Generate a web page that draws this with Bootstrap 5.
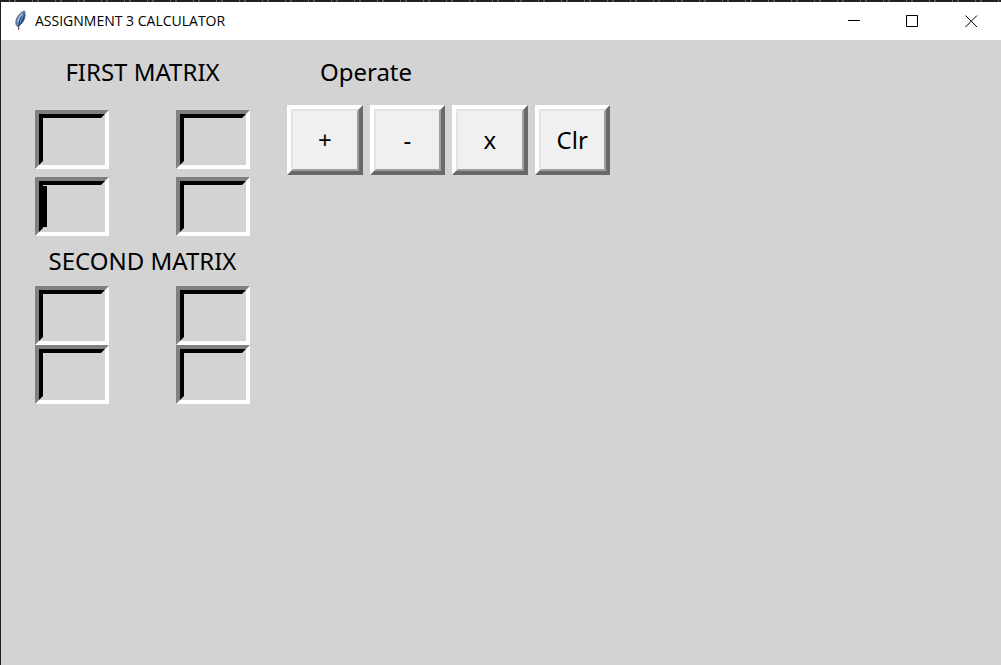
<!DOCTYPE html>
<html lang="en">
<head>
<meta charset="utf-8">
<meta name="viewport" content="width=device-width, initial-scale=1">
<title>ASSIGNMENT 3 CALCULATOR</title>
<link href="https://cdn.jsdelivr.net/npm/bootstrap@5.3.0/dist/css/bootstrap.min.css" rel="stylesheet">
<style>
  body {
    background: #d3d3d3;
    color: #000;
    font-family: "Noto Sans", "Open Sans", sans-serif;
    border-left: 1px solid #231f20;
  }
  /* sliver of the editor behind the window */
  .backdrop {
    height: 2px;
    margin-left: -1px;
    background: repeating-linear-gradient(90deg, #231f20 0 9px, #6b6660 9px 10px, #231f20 10px 14px, #4a5560 14px 16px, #231f20 16px 23px);
  }
  .titlebar { height: 38px; padding-left: 14px; background: #fff; }
  .titlebar h1 { font: 14px/20px "Open Sans", sans-serif; }
  .win-btn { width: 59px; height: 38px; background: none; }
  .workspace { padding: 7px 34px; gap: 37px; }
  .caption { font-size: 24px; line-height: 50px; white-space: nowrap; }
  .matrix { width: 215px; }
  .matrix-cells { display: grid; grid-template-columns: 74px 74px; justify-content: space-between; }
  .spaced { row-gap: 8px; margin-top: 13px; }
  .cell {
    height: 59px;
    border: 4px solid;
    border-color: #808080 #fff #fff #808080;
  }
  .cell input {
    border: 4px solid;
    border-color: #000 #d3d3d3 #d3d3d3 #000;
    background: #d3d3d3;
    font-size: 24px;
    outline: 0;
    border-radius: 0;
  }
  .caret { left: 3px; top: 5px; width: 5px; height: 41px; background: #000; }
  .operators { display: grid; grid-template-columns: repeat(4, 1fr); column-gap: 7px; width: 323px; }
  .operators h2 { grid-column: span 2; margin-bottom: 8px; }
  .op {
    grid-row: 2;
    height: 70px;
    padding: 0;
    border: 4px solid;
    border-color: #fff #696969 #696969 #fff;
    background: #f0f0f0;
    color: #000;
    font-size: 24px;
  }
  .op span {
    border: 2px solid;
    border-color: #e3e3e3 #a0a0a0 #a0a0a0 #e3e3e3;
  }
</style>
</head>
<body class="min-vh-100">
<div class="backdrop"></div>
<header class="titlebar d-flex align-items-center">
  <svg class="flex-shrink-0" width="12" height="22" viewBox="0 0 12 22" aria-hidden="true">
    <path d="M9.500 1C6 2 2 6 1 11C.6 14 1 15 2.500 16.500C6 15 9.500 11 10 6C10.200 4 10 2 9.500 1Z" fill="#5b93d6" stroke="#55606b" stroke-width="1"/>
    <path d="M10 3C10.300 8 8.500 12 4.500 15.500L7 9Z" fill="#2c4d78"/>
    <path d="M8.500 3C5.500 7 4 11 3.500 20" fill="none" stroke="#333" stroke-width="1"/>
    <path d="M7.500 3.500C5 6 3.500 8 2.800 12" fill="none" stroke="#a9c8ee" stroke-width="1.200"/>
  </svg>
  <h1 class="mb-0 ms-2 me-auto text-nowrap">ASSIGNMENT 3 CALCULATOR</h1>
  <button type="button" class="win-btn border-0 p-0 d-flex align-items-center justify-content-center" aria-label="Minimize">
    <svg width="13" height="13"><path d="M1 5.500H13" stroke="#000"/></svg>
  </button>
  <button type="button" class="win-btn border-0 p-0 d-flex align-items-center justify-content-center" aria-label="Maximize">
    <svg width="13" height="13"><path d="M.5 .5H11.500V11.500H.5Z" fill="none" stroke="#000"/></svg>
  </button>
  <button type="button" class="win-btn border-0 p-0 d-flex align-items-center justify-content-center" aria-label="Close">
    <svg width="13" height="13"><path d="M.5 .5L12 12M12 .5L.5 12" stroke="#000"/></svg>
  </button>
</header>

<main class="workspace d-flex align-items-start">
  <form class="matrix flex-shrink-0" autocomplete="off">
    <h2 class="caption fw-normal text-center mb-0">FIRST MATRIX</h2>
    <div class="matrix-cells spaced">
      <div class="cell"><input class="d-block w-100 h-100" type="text" aria-label="First matrix, row 1 column 1"></div>
      <div class="cell"><input class="d-block w-100 h-100" type="text" aria-label="First matrix, row 1 column 2"></div>
      <div class="cell position-relative"><input class="d-block w-100 h-100" type="text" aria-label="First matrix, row 2 column 1"><span class="caret position-absolute"></span></div>
      <div class="cell"><input class="d-block w-100 h-100" type="text" aria-label="First matrix, row 2 column 2"></div>
    </div>
    <h2 class="caption fw-normal text-center mb-0">SECOND MATRIX</h2>
    <div class="matrix-cells">
      <div class="cell"><input class="d-block w-100 h-100" type="text" aria-label="Second matrix, row 1 column 1"></div>
      <div class="cell"><input class="d-block w-100 h-100" type="text" aria-label="Second matrix, row 1 column 2"></div>
      <div class="cell"><input class="d-block w-100 h-100" type="text" aria-label="Second matrix, row 2 column 1"></div>
      <div class="cell"><input class="d-block w-100 h-100" type="text" aria-label="Second matrix, row 2 column 2"></div>
    </div>
  </form>
  <section class="operators flex-shrink-0">
    <h2 class="caption fw-normal text-center">Operate</h2>
    <button type="button" class="op"><span class="d-flex w-100 h-100 align-items-center justify-content-center">+</span></button>
    <button type="button" class="op"><span class="d-flex w-100 h-100 align-items-center justify-content-center">-</span></button>
    <button type="button" class="op"><span class="d-flex w-100 h-100 align-items-center justify-content-center">x</span></button>
    <button type="button" class="op"><span class="d-flex w-100 h-100 align-items-center justify-content-center">Clr</span></button>
  </section>
</main>
<script src="https://cdn.jsdelivr.net/npm/bootstrap@5.3.0/dist/js/bootstrap.bundle.min.js"></script>
</body>
</html>
